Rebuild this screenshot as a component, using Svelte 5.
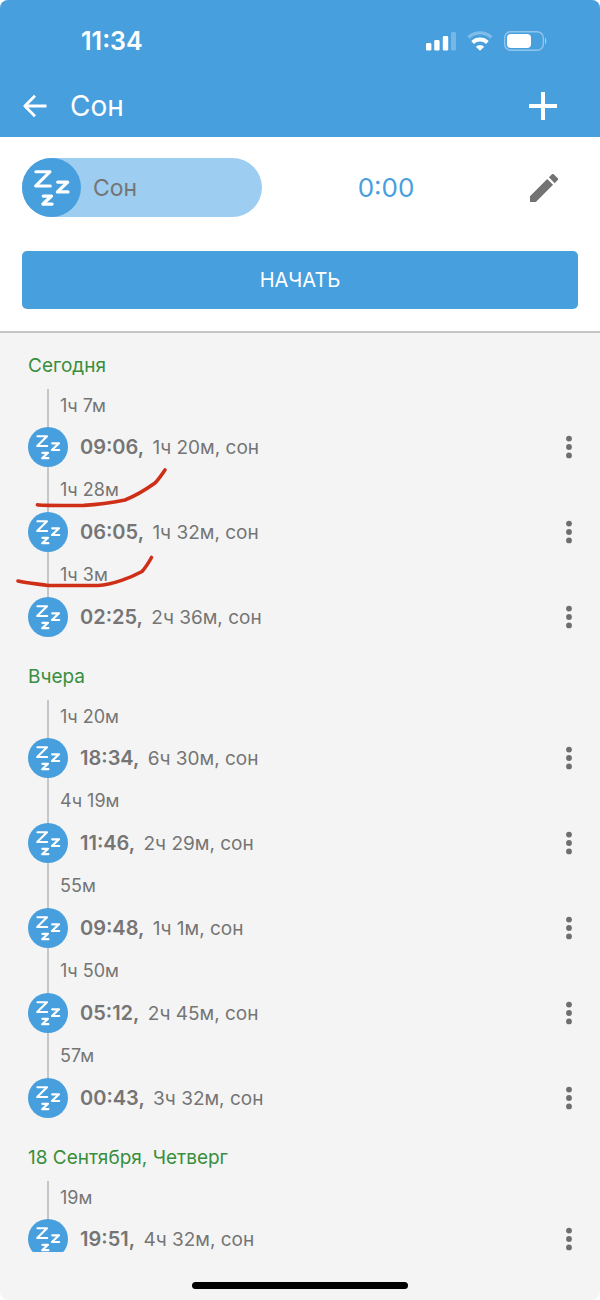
<script>
  const title = 'Сон';

  const days = [
    {
      label: 'Сегодня',
      entries: [
        { gap: '1ч 7м', time: '09:06', duration: '1ч 20м' },
        { gap: '1ч 28м', time: '06:05', duration: '1ч 32м' },
        { gap: '1ч 3м', time: '02:25', duration: '2ч 36м' }
      ]
    },
    {
      label: 'Вчера',
      entries: [
        { gap: '1ч 20м', time: '18:34', duration: '6ч 30м' },
        { gap: '4ч 19м', time: '11:46', duration: '2ч 29м' },
        { gap: '55м', time: '09:48', duration: '1ч 1м' },
        { gap: '1ч 50м', time: '05:12', duration: '2ч 45м' },
        { gap: '57м', time: '00:43', duration: '3ч 32м' }
      ]
    },
    {
      label: '18 Сентября, Четверг',
      entries: [{ gap: '19м', time: '19:51', duration: '4ч 32м' }]
    }
  ];
</script>

{#snippet sleepIcon()}
  <svg class="sleep-icon" viewBox="0 0 40 40" aria-hidden="true">
    <circle cx="20" cy="20" r="20" fill="#489fdd" />
    <g fill="none" stroke="#fff" stroke-linecap="round" stroke-linejoin="round">
      <path d="M9.4 9.3H19L9.2 19H19.2" stroke-width="2.1" />
      <path d="M24.2 16.3H31L24 23H31.2" stroke-width="2.2" />
      <path d="M14.4 25.8H20L14.2 31.2H20.4" stroke-width="2.2" />
    </g>
  </svg>
{/snippet}

<div class="app">
  <header class="header">
    <div class="status-bar">
      <span class="clock">11:34</span>
      <div class="indicators">
        <svg width="30" height="20" viewBox="0 0 30 20" fill="#fff" aria-hidden="true">
          <rect x="0" y="12" width="5.4" height="7.6" rx="1.4" />
          <rect x="8.2" y="9" width="5.4" height="10.6" rx="1.4" />
          <rect x="16.8" y="5" width="5.4" height="14.6" rx="1.4" />
          <rect x="25" y="1" width="5" height="18.6" rx="1.4" opacity="0.25" />
        </svg>
        <svg width="26" height="20" viewBox="0 0 26 20" aria-hidden="true">
          <path d="M1.6 6.4A16.5 16.5 0 0 1 24.4 6.4" fill="none" stroke="#fff" stroke-width="3.4" opacity="0.3" />
          <path d="M5.6 11.5A10.8 10.8 0 0 1 20.4 11.5" fill="none" stroke="#fff" stroke-width="4" />
          <path d="M13 19.8L8.8 15.8A6 6 0 0 1 17.2 15.8Z" fill="#fff" />
        </svg>
        <svg width="43" height="20" viewBox="0 0 43 20" aria-hidden="true">
          <rect x="0.7" y="0.7" width="38.6" height="18.6" rx="6" fill="none" stroke="#fff" stroke-width="1.4" opacity="0.4" />
          <rect x="3" y="3" width="24" height="14" rx="4" fill="#fff" />
          <path d="M41 6.8C42.8 7.6 42.8 12.4 41 13.2Z" fill="#fff" opacity="0.5" />
        </svg>
      </div>
    </div>
    <div class="toolbar">
      <button class="icon-button" aria-label="Назад">
        <svg width="26" height="26" viewBox="0 0 26 26" fill="none" stroke="#fff" stroke-width="2.8" aria-hidden="true">
          <path d="M24.5 13H4M13 2.8L2.8 13L13 23.2" stroke-linejoin="round" />
        </svg>
      </button>
      <h1>{title}</h1>
      <button class="icon-button" aria-label="Добавить">
        <svg width="28" height="28" viewBox="0 0 28 28" stroke="#fff" stroke-width="4" aria-hidden="true">
          <path d="M14 0V28M0 14H28" />
        </svg>
      </button>
    </div>
  </header>

  <section class="panel">
    <div class="timer">
      <div class="activity">
        {@render sleepIcon()}
        <span>{title}</span>
      </div>
      <span class="elapsed">0:00</span>
      <button class="icon-button" aria-label="Изменить">
        <svg width="28" height="28" viewBox="3 3 18 18" fill="#737373" aria-hidden="true">
          <path d="M3 17.25V20.6Q3 21 3.4 21H6.75L17.81 9.94l-3.75-3.75L3 17.25zM20.71 7.04a1 1 0 0 0 0-1.41l-2.34-2.34a1 1 0 0 0-1.41 0l-1.83 1.83 3.75 3.75 1.83-1.83z" />
        </svg>
      </button>
    </div>
    <button class="start">НАЧАТЬ</button>
  </section>

  <main class="history">
    {#each days as day}
      <section class="day">
        <h2>{day.label}</h2>
        <ul>
          {#each day.entries as entry}
            <li>
              <div class="gap">{entry.gap}</div>
              <div class="entry">
                {@render sleepIcon()}
                <p><strong>{entry.time},</strong> {entry.duration}, сон</p>
                <button class="icon-button" aria-label="Меню записи">
                  <svg width="18" height="24" viewBox="0 0 18 24" fill="#6e6e6e" aria-hidden="true">
                    <circle cx="9" cy="3.6" r="2.9" />
                    <circle cx="9" cy="12" r="2.9" />
                    <circle cx="9" cy="20.4" r="2.9" />
                  </svg>
                </button>
              </div>
            </li>
          {/each}
        </ul>
      </section>
    {/each}

    <svg class="marks" width="160" height="126" viewBox="14 465 160 126" aria-hidden="true">
      <path d="M37.5 504.8C40 505.5 60 505.6 84 505.4C100 504.5 115 502 125 500C135 496 148 488 155 483C159 479 162 474 165 470" />
      <path d="M18 581C27 583 38 584 48 585.5H98C112 585 132 577 142 571.5C146 567 149 562 151.5 557.5" />
    </svg>
  </main>

  <footer class="home-area">
    <div class="home-indicator"></div>
  </footer>
</div>

<style>
  :global(body) {
    margin: 0;
    background: #fff;
  }

  .app {
    display: flex;
    flex-direction: column;
    height: 100vh;
    overflow: hidden;
    border-radius: 8px;
    background: #f4f4f4;
    color: #757575;
    font-family: Inter, 'Liberation Sans', sans-serif;
  }

  h1,
  h2,
  p,
  ul {
    margin: 0;
    padding: 0;
    font-weight: 400;
  }

  ul {
    list-style: none;
  }

  svg {
    display: block;
    flex: none;
  }

  button {
    padding: 0;
    border: none;
    background: none;
    font: inherit;
    cursor: pointer;
  }

  .icon-button {
    display: flex;
    align-items: center;
    justify-content: center;
  }

  .header {
    flex: none;
    padding-top: 8px;
    background: #489fdd;
    color: #fff;
  }

  .status-bar {
    display: flex;
    align-items: center;
    justify-content: space-between;
    height: 66px;
    padding: 0 53px 0 81px;
  }

  .clock {
    font-size: 25px;
    font-weight: 600;
  }

  .indicators {
    display: flex;
    gap: 11px;
  }

  .toolbar {
    display: flex;
    align-items: center;
    height: 63px;
    padding: 0 43px 0 22px;
  }

  .toolbar h1 {
    flex: 1;
    margin-left: 22px;
    font-size: 28px;
  }

  .panel {
    flex: none;
    padding: 21px 22px 22px;
    border-bottom: 2px solid #c4c4c4;
    background: #fff;
  }

  .timer {
    display: grid;
    grid-template-columns: 240px 1fr 68px;
    align-items: center;
    margin-bottom: 34px;
  }

  .activity {
    display: flex;
    align-items: center;
    gap: 12px;
    border-radius: 30px;
    background: #9dcef2;
    font-size: 23px;
  }

  .activity .sleep-icon {
    width: 59px;
    height: 59px;
  }

  .elapsed {
    color: #489fdd;
    font-size: 26px;
    text-align: center;
  }

  .start {
    width: 100%;
    height: 58px;
    border-radius: 5px;
    background: #489fdd;
    color: #fff;
    font-size: 20px;
  }

  .history {
    position: relative;
    display: flex;
    flex: 1;
    flex-direction: column;
    gap: 28px;
    min-height: 0;
    padding: 21px 22px 0 28px;
    overflow-y: auto;
    scrollbar-width: none;
  }

  .day {
    flex: none;
  }

  .day h2 {
    margin-bottom: 11px;
    color: #388e3c;
    font-size: 19px;
    line-height: 24px;
  }

  .gap {
    height: 45px;
    margin-left: 19px;
    padding-left: 11px;
    border-left: 2px solid #c6c6c6;
    font-size: 18px;
    line-height: 45px;
  }

  li:first-child .gap {
    height: 38px;
    line-height: 33px;
  }

  .entry {
    display: flex;
    align-items: center;
    gap: 12px;
    height: 40px;
  }

  .entry .sleep-icon {
    width: 40px;
    height: 40px;
  }

  .entry p {
    flex: 1;
    font-size: 19px;
  }

  .entry strong {
    margin-right: 3px;
    font-size: 20px;
    font-weight: 600;
  }

  .marks {
    position: absolute;
    top: 132px;
    left: 14px;
    fill: none;
    stroke: #cf2e17;
    stroke-width: 3.6;
    stroke-linecap: round;
    stroke-linejoin: round;
    pointer-events: none;
  }

  .home-area {
    display: flex;
    flex: none;
    align-items: flex-end;
    justify-content: center;
    height: 48px;
  }

  .home-indicator {
    width: 36%;
    height: 7px;
    margin-bottom: 11px;
    border-radius: 4px;
    background: #000;
  }
</style>
